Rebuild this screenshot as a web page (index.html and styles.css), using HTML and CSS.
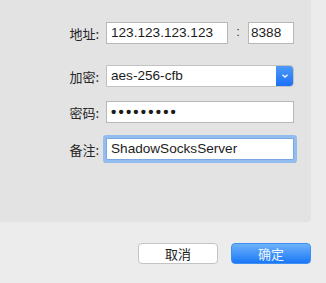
FILE: index.html
```html
<!DOCTYPE html>
<html lang="zh-CN">
<head>
    <meta charset="UTF-8">
    <title>服务器设置</title>
    <link rel="stylesheet" href="styles.css">
</head>
<body>
    <div id="sheet">
        <div id="panel">
            <div class="row">
                <span class="label">地址:</span>
                <div class="field field-addr">123.123.123.123</div>
                <span class="sep">:</span>
                <div class="field field-port">8388</div>
            </div>
            <div class="row row-method">
                <span class="label">加密:</span>
                <div class="field field-select">
                    <span class="select-value">aes-256-cfb</span>
                    <span class="select-btn">
                        <svg width="8" height="6" viewBox="0 0 8 6"><path d="M1.5 1.8 L4 4.2 L6.5 1.8" fill="none" stroke="#fff" stroke-width="1.3"/></svg>
                    </span>
                </div>
            </div>
            <div class="row row-pass">
                <span class="label">密码:</span>
                <div class="field field-pass">•••••••••</div>
            </div>
            <div class="row row-remark">
                <span class="label">备注:</span>
                <div class="field field-focus">ShadowSocksServer</div>
            </div>
        </div>
        <div class="actions">
            <button type="button" class="btn btn-cancel">取消</button>
            <button type="button" class="btn btn-ok">确定</button>
        </div>
    </div>
</body>
</html>
```

FILE: styles.css
```css
* {
    margin: 0;
    padding: 0;
    box-sizing: border-box;
}

body {
    background-color: #ececec;
    font-family: 'Liberation Sans', 'Noto Sans CJK SC', sans-serif;
    color: #1c1c1c;
}

#sheet {
    width: 326px;
    height: 283px;
}

#panel {
    width: 311px;
    height: 222px;
    background-color: #e3e3e3;
    border-bottom-right-radius: 4px;
    padding-top: 22px;
}

.row {
    display: flex;
    align-items: center;
    height: 22px;
}

.row-method {
    margin-top: 21px;
}

.row-pass {
    margin-top: 14px;
}

.row-remark {
    margin-top: 15px;
}

.label {
    width: 99px;
    margin-right: 7px;
    text-align: right;
    font-family: 'Noto Sans CJK SC', sans-serif;
    font-size: 13px;
    color: #262626;
}

.field {
    height: 22px;
    background-color: #fff;
    border: 1px solid #b8b8b8;
    padding-left: 4px;
    font-size: 13.6px;
    line-height: 20px;
    white-space: nowrap;
}

.field-addr {
    width: 122px;
}

.sep {
    width: 20px;
    text-align: center;
    font-size: 13px;
    margin-top: -3px;
    color: #333;
}

.field-port {
    width: 46px;
    padding-left: 2px;
}

.field-select {
    width: 188px;
    display: flex;
    justify-content: space-between;
    border-radius: 0 4px 4px 0;
    border-color: #c2c2c2;
    overflow: hidden;
}

.select-btn {
    width: 18px;
    margin: -1px -1px -1px 0;
    height: 22px;
    background: linear-gradient(#4f9cfb, #1a6ef4);
    border-radius: 0 4px 4px 0;
    display: flex;
    align-items: center;
    justify-content: center;
}

.field-pass {
    width: 188px;
    font-size: 15px;
    letter-spacing: 2.2px;
    font-weight: bold;
}

.field-focus {
    width: 188px;
    border-color: #7aa7e0;
    box-shadow: 0 0 0 3px #93bdee;
    border-radius: 1px;
}

.actions {
    width: 311px;
    display: flex;
    justify-content: flex-end;
    gap: 13px;
    margin-top: 21px;
}

.btn {
    width: 80px;
    height: 21px;
    border-radius: 4px;
    font-family: 'Noto Sans CJK SC', sans-serif;
    font-size: 13px;
    line-height: 19px;
    cursor: pointer;
}

.btn-cancel {
    background-color: #fff;
    border: 1px solid #c4c4c4;
    color: #222;
}

.btn-ok {
    background: linear-gradient(#6db2fb, #1a78f5);
    border: 1px solid #3f8ef2;
    color: #eef5ff;
}
```
